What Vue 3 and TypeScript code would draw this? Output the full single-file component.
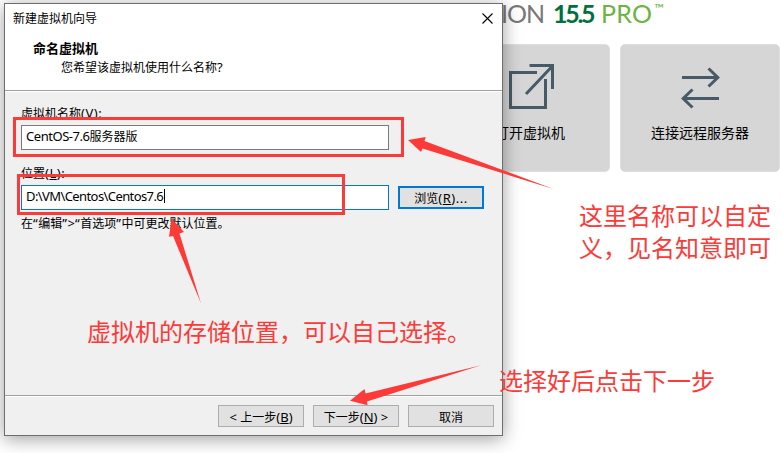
<script setup lang="ts">
interface WizardButton {
  lead?: string
  label: string
  key?: string
  tail?: string
}

const buttons: WizardButton[] = [
  { lead: '< ', label: '上一步', key: 'B' },
  { label: '下一步', key: 'N', tail: ' >' },
  { label: '取消' },
]
const vmName = 'CentOS-7.6'
const vmNameSuffix = '服务器版'
const location = 'D:\\VM\\Centos\\Centos7.6'
</script>

<template>
  <div class="desktop">
    <main class="home">
      <h1 class="brand">
        <span class="product">ION</span>
        <span class="version">15.5</span>
        <span class="edition">PRO</span>
        <span class="tm">™</span>
      </h1>
      <div class="cards">
        <section class="card">
          <svg class="card-icon" width="48" height="48" viewBox="0 0 48 48">
            <path d="M31 9.500H4.500V44.500H39.500V16" />
            <path d="M23.500 2.500H46.500V26" />
            <path d="M20 31 46 3.500" />
          </svg>
          <span>打开虚拟机</span>
        </section>
        <section class="card">
          <svg class="card-icon" width="48" height="48" viewBox="0 0 48 48">
            <path d="M6 14.500H42M32.500 5.500 41.800 14.500 32.500 23.500" />
            <path d="M43 35.500H7M16.500 26.500 7.200 35.500 16.500 44.500" />
          </svg>
          <span>连接远程服务器</span>
        </section>
      </div>
    </main>

    <div class="dialog">
      <header class="head">
        <div class="titlebar">
          <span>新建虚拟机向导</span>
          <svg class="close" width="11" height="11" viewBox="0 0 11 11">
            <path d="M.5.5 10.500 10.500M10.500.5.5 10.500" />
          </svg>
        </div>
        <div class="heading">命名虚拟机</div>
        <div class="subheading">您希望该虚拟机使用什么名称<span class="en">?</span></div>
      </header>
      <div class="body">
        <div class="label">虚拟机名称<span class="en wide">(<u>V</u>):</span></div>
        <div class="field"><span class="name">{{ vmName }}</span>{{ vmNameSuffix }}</div>
        <div class="label second">位置<span class="en wide">(<u>L</u>):</span></div>
        <div class="row">
          <div class="field focus"><span class="path">{{ location }}</span><i class="caret"></i></div>
          <div class="btn browse"><span>浏览<span class="en wide">(<u>R</u>)...</span></span></div>
        </div>
        <div class="hint">
          在<i class="en">“</i>编辑<i class="en">”</i><span class="en">&gt;</span><i class="en">“</i>首选项<i class="en">”</i>中可更改默认位置。
        </div>
      </div>
      <footer class="foot">
        <div v-for="b in buttons" :key="b.label" class="btn">
          <span class="caption"><span v-if="b.lead" class="en">{{ b.lead }}</span>{{ b.label }}<span v-if="b.key" class="en">(<u>{{ b.key }}</u>){{ b.tail }}</span></span>
        </div>
      </footer>
    </div>

    <svg class="marks" width="782" height="453" viewBox="0 0 782 453">
      <rect x="14.500" y="118.500" width="388" height="37" />
      <rect x="18.500" y="175.500" width="325" height="38" />
      <path d="M408 140 425.700 137 424.500 141 553.500 189 422.500 148.500 421 152Z" />
      <path d="M171.600 218.500 184 232 179.500 233.500 201 303.500 173 236 169 236.800Z" />
      <path d="M350 400.700 364.500 389 365.500 393.500 481 365.300 367 401.500 367.500 405.200Z" />
    </svg>
    <p class="note note-name">这里名称可以自定义，见名知意即可</p>
    <p class="note note-path">虚拟机的存储位置，可以自己选择。</p>
    <p class="note note-next">选择好后点击下一步</p>
  </div>
</template>

<style>
body {
  margin: 0;
  overflow: hidden;
}
</style>

<style scoped>
.desktop {
  position: relative;
  width: 782px;
  height: 453px;
  overflow: hidden;
  background: #fff;
  color: #000;
  font-family: "Noto Sans", "Noto Sans CJK SC", sans-serif;
  font-size: 12px;
}
.home {
  padding-left: 450px;
}
.brand {
  display: flex;
  height: 44px;
  margin: 0;
  padding-left: 51px;
  box-sizing: border-box;
  font: 400 25px/26px Lato, sans-serif;
  white-space: nowrap;
}
.product {
  width: 52px;
  color: #77787b;
  letter-spacing: -1px;
}
.version {
  width: 48px;
  color: #00703c;
  font-weight: 700;
  letter-spacing: -2.300px;
}
.edition {
  width: 53px;
  color: #6cb33f;
  letter-spacing: 0.3px;
}
.tm {
  color: #6cb33f;
  font-size: 13px;
  line-height: 17px;
}
.cards {
  display: flex;
  gap: 10px;
}
.card {
  display: flex;
  flex: none;
  flex-direction: column;
  align-items: center;
  width: 160px;
  height: 128px;
  padding-top: 18px;
  box-sizing: border-box;
  border: 1px solid #dedede;
  border-radius: 5px;
  background: #d6d6d6;
  font-family: "Noto Sans CJK SC", sans-serif;
  font-size: 14px;
  line-height: 20px;
}
.card-icon {
  margin-bottom: 11px;
  fill: none;
  stroke: #465a67;
  stroke-width: 3;
}
.dialog {
  position: absolute;
  left: 4px;
  top: 3px;
  display: flex;
  flex-direction: column;
  width: 499px;
  height: 433px;
  box-sizing: border-box;
  border: 1px solid #6e6e6e;
  background: #f0f0f0;
  box-shadow: 0 3px 17px rgba(0, 0, 0, 0.38);
}
.head {
  height: 87px;
  box-sizing: border-box;
  border-bottom: 1px solid #a0a0a0;
  background: #fff;
}
.titlebar {
  display: flex;
  justify-content: space-between;
  align-items: center;
  height: 28px;
  padding: 0 9px 0 8px;
}
.close {
  fill: none;
  stroke: #000;
  stroke-width: 1.100;
}
.heading {
  padding: 7px 0 0 28px;
  font-weight: 700;
  font-size: 13px;
  line-height: 19px;
}
.subheading {
  padding-left: 56px;
  line-height: 19px;
}
.en {
  font-size: 13px;
  font-style: normal;
  line-height: 1;
}
.wide {
  letter-spacing: 0.5px;
}
.body {
  flex: 1;
  padding: 13px 0 0 16px;
  border-top: 1px solid #fff;
}
.label {
  height: 20px;
  line-height: 18px;
}
.second {
  margin-top: 15px;
}
.field {
  display: flex;
  align-items: center;
  width: 368px;
  height: 25px;
  padding: 0 0 3px 4px;
  box-sizing: border-box;
  border: 1px solid #7a7a7a;
  background: #fff;
}
.focus {
  border-color: #0078d7;
}
.name,
.path {
  font-size: 13px;
  letter-spacing: -0.450px;
}
.path {
  letter-spacing: -0.590px;
}
.caret {
  width: 1px;
  height: 14px;
  margin-left: 1px;
  background: #000;
}
.row {
  display: flex;
  align-items: center;
  gap: 9px;
}
.hint {
  padding-top: 5px;
  line-height: 18px;
  white-space: nowrap;
}
.hint i {
  letter-spacing: 0.6px;
}
.btn {
  display: flex;
  justify-content: center;
  align-items: center;
  width: 86px;
  height: 22px;
  box-sizing: border-box;
  border: 1px solid #adadad;
  background: #e1e1e1;
  white-space: nowrap;
}
.caption {
  padding-top: 1px;
}
.browse {
  height: 23px;
  border: 2px solid #0078d7;
}
.foot {
  display: flex;
  justify-content: flex-end;
  gap: 9px;
  height: 30px;
  padding: 9px 8px 0 0;
  border-top: 1px solid #a0a0a0;
  box-shadow: inset 0 1px #fff;
}
.marks {
  position: absolute;
  left: 0;
  top: 0;
}
.marks rect {
  fill: none;
  stroke: #fc3a38;
  stroke-width: 3;
}
.marks path {
  fill: #fc3a38;
}
.note {
  position: absolute;
  margin: 0;
  color: #fc3a38;
  font-family: "Noto Sans CJK SC", sans-serif;
  font-size: 24px;
  line-height: 32px;
}
.note-name {
  left: 579px;
  top: 199px;
  width: 194px;
}
.note-path {
  left: 87px;
  top: 315px;
  white-space: nowrap;
}
.note-next {
  left: 499px;
  top: 364px;
  white-space: nowrap;
}
</style>
